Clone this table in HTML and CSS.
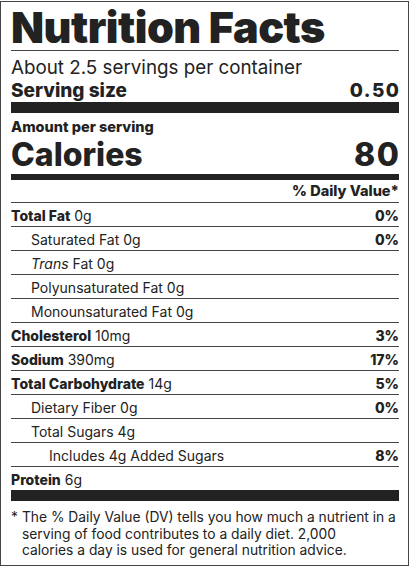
FILE: index.html
```html
<!DOCTYPE html>
<html>
<head>
<meta charset="utf-8">
<link rel="stylesheet" href="styles.css">
</head>
<body>
<section class="label">
  <h1 class="title">Nutrition Facts</h1>
  <div class="servings">About 2.5 servings per container</div>
  <div class="serving-size"><span>Serving size</span><span class="num">0.50</span></div>
  <div class="bar bar-thick"></div>
  <div class="amount">Amount per serving</div>
  <div class="calories"><span>Calories</span><span class="num">80</span></div>
  <div class="bar bar-mid"></div>
  <div class="dv-head">% Daily Value*</div>
  <div class="row"><span><b>Total Fat</b> 0g</span><b>0%</b></div>
  <div class="row sub"><span>Saturated Fat 0g</span><b>0%</b></div>
  <div class="row sub"><span><i>Trans</i> Fat 0g</span></div>
  <div class="row sub"><span>Polyunsaturated Fat 0g</span></div>
  <div class="row sub"><span>Monounsaturated Fat 0g</span></div>
  <div class="row"><span><b>Cholesterol</b> 10mg</span><b>3%</b></div>
  <div class="row"><span><b>Sodium</b> 390mg</span><b>17%</b></div>
  <div class="row"><span><b>Total Carbohydrate</b> 14g</span><b>5%</b></div>
  <div class="row sub"><span>Dietary Fiber 0g</span><b>0%</b></div>
  <div class="row sub"><span>Total Sugars 4g</span></div>
  <div class="row sub2"><span>Includes 4g Added Sugars</span><b>8%</b></div>
  <div class="row"><span><b>Protein</b> 6g</span></div>
  <div class="bar bar-thick"></div>
  <p class="foot"><span class="star">*</span><span>The % Daily Value (DV) tells you how much a nutrient in a serving of food contributes to a daily diet. 2,000<br>calories a day is used for general nutrition advice.</span></p>
</section>
</body>
</html>
```

FILE: styles.css
```css
html, body {
  margin: 0;
  padding: 0;
  background: #fff;
}
body {
  font-family: Inter, "Liberation Sans", sans-serif;
  color: #222;
}
.label {
  box-sizing: border-box;
  width: 409px;
  height: 565px;
  margin-top: 1px;
  border: 1px solid #444;
  padding: 0 9px 0 10px;
}
.title {
  box-sizing: border-box;
  margin: 0;
  padding-top: 3px;
  font-size: 43px;
  font-weight: 900;
  line-height: 45px;
  letter-spacing: -0.5px;
  border-bottom: 1px solid #444;
  height: 49px;
}
.servings {
  font-size: 18.8px;
  line-height: 22px;
  padding-top: 6px;
}
.serving-size {
  display: flex;
  justify-content: space-between;
  font-size: 19px;
  font-weight: 800;
  line-height: 22px;
  padding-top: 1px;
}
.num {
  letter-spacing: 1.5px;
  margin-right: -1.5px;
}
.bar {
  background: #222;
}
.bar-thick {
  height: 11px;
}
.bar-mid {
  height: 6px;
}
.amount {
  font-size: 14.5px;
  font-weight: 800;
  line-height: 18px;
  padding-top: 5px;
}
.calories {
  display: flex;
  justify-content: space-between;
  align-items: baseline;
  font-size: 32px;
  font-weight: 800;
  line-height: 38px;
}
.dv-head {
  text-align: right;
  font-size: 14.5px;
  font-weight: 800;
  line-height: 22px;
}
.row {
  display: flex;
  justify-content: space-between;
  align-items: center;
  box-sizing: border-box;
  height: 24px;
  border-top: 1px solid #444;
  padding-top: 3px;
  font-size: 14px;
  line-height: 20px;
}
.row b {
  font-weight: 800;
}
.sub {
  padding-left: 20px;
}
.sub2 {
  padding-left: 38px;
}
.foot {
  display: flex;
  gap: 4px;
  margin: 0;
  padding-top: 8px;
  font-size: 13.8px;
  line-height: 16.5px;
}
.star {
  flex: none;
}
```
